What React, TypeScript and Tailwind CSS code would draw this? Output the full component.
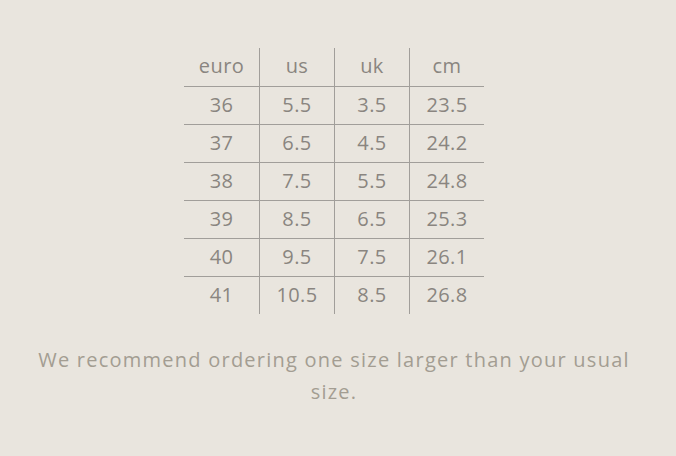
const rows = [
  ["euro", "us", "uk", "cm"],
  ["36", "5.5", "3.5", "23.5"],
  ["37", "6.5", "4.5", "24.2"],
  ["38", "7.5", "5.5", "24.8"],
  ["39", "8.5", "6.5", "25.3"],
  ["40", "9.5", "7.5", "26.1"],
  ["41", "10.5", "8.5", "26.8"],
];

export default function App() {
  return (
    <div
      className="flex min-h-[456px] w-full flex-col items-center bg-[#e9e5de] pr-2 pt-12"
      style={{ fontFamily: '"Open Sans", sans-serif' }}
    >
      <div className="flex w-[300px] flex-col">
        {rows.map((row, i) => (
          <div
            key={i}
            className={`grid h-[38px] grid-cols-4 ${i > 0 ? "border-t border-[#a19e9a]" : ""}`}
          >
            {row.map((cell, j) => (
              <div
                key={j}
                className={`flex items-center justify-center pb-[2px] text-[20px] tracking-[0.02em] text-[#8a8580] ${j > 0 ? "border-l border-[#a19e9a]" : ""}`}
              >
                {cell}
              </div>
            ))}
          </div>
        ))}
      </div>
      <p className="mt-[30px] w-[620px] text-center text-[20px] leading-[32px] tracking-[0.062em] text-[#a39d92]">
        We recommend ordering one size larger than your usual size.
      </p>
    </div>
  );
}
